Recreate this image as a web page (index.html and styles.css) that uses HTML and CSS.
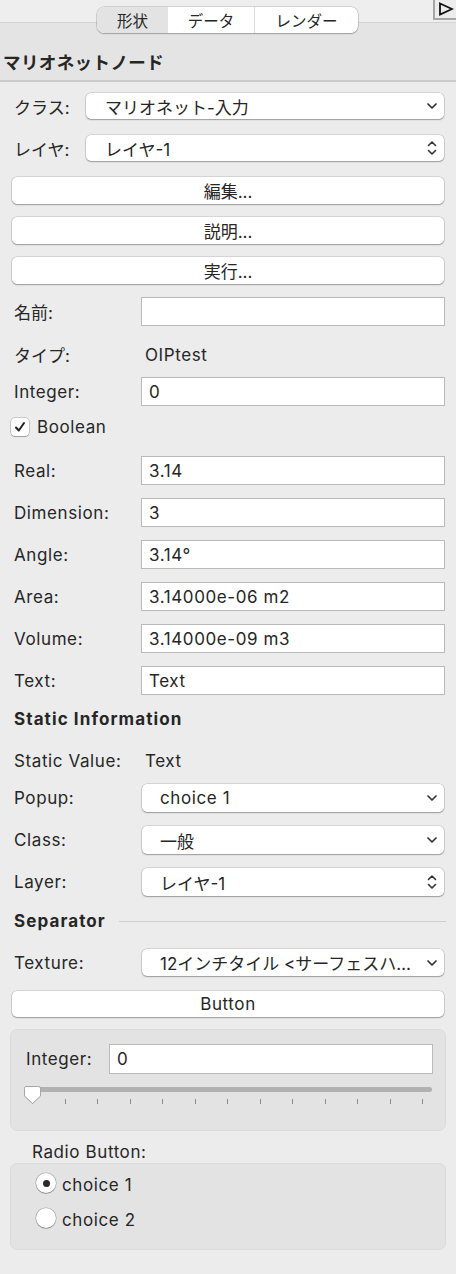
FILE: index.html
```html
<!DOCTYPE html>
<html lang="ja">
<head>
<meta charset="utf-8">
<title>マリオネットノード</title>
<link rel="stylesheet" href="styles.css">
</head>
<body>
<div class="topbar">
  <div class="seg">
    <div class="seg-item sel">形状</div>
    <div class="seg-item mid">データ</div>
    <div class="seg-item last">レンダー</div>
  </div>
  <div class="collapse">
    <svg width="16" height="14" viewBox="0 0 16 14"><path d="M2 1.5 L14 7 L2 12.5 Z" fill="none" stroke="#111" stroke-width="1.8" stroke-linejoin="miter"/></svg>
  </div>
</div>
<div class="title">マリオネットノード</div>

<div class="content">
  <div class="row short h26 m11"><span class="lbl ja">クラス:</span><div class="popup ja"><span>マリオネット-入力</span><svg class="chev" width="10" height="6" viewBox="0 0 10 6"><path d="M1 1 L5 5 L9 1" fill="none" stroke="#333" stroke-width="1.7" stroke-linecap="round" stroke-linejoin="round"/></svg></div></div>
  <div class="row short h26 m16"><span class="lbl ja">レイヤ:</span><div class="popup ja"><span>レイヤ-1</span><svg class="chev" width="10" height="16" viewBox="0 0 10 16"><path d="M1.5 5.5 L5 2 L8.5 5.5 M1.5 10.5 L5 14 L8.5 10.5" fill="none" stroke="#333" stroke-width="1.6" stroke-linecap="round" stroke-linejoin="round"/></svg></div></div>

  <div class="btnrow h27 m16"><div class="btn ja">編集...</div></div>
  <div class="btnrow h27 m13"><div class="btn ja">説明...</div></div>
  <div class="btnrow h27 m13"><div class="btn ja">実行...</div></div>

  <div class="row h29 m13"><span class="lbl wide ja">名前:</span><div class="field"></div></div>
  <div class="row h29 m14"><span class="lbl wide ja">タイプ:</span><span class="static">OIPtest</span></div>
  <div class="row h29 m8"><span class="lbl wide">Integer:</span><div class="field">0</div></div>
  <div class="checkrow m11">
    <span class="checkbox"><svg width="12" height="12" viewBox="0 0 12 12"><path d="M2 6.5 L4.8 9.5 L10 2" fill="none" stroke="#222" stroke-width="2" stroke-linecap="round" stroke-linejoin="round"/></svg></span>
    <span>Boolean</span>
  </div>
  <div class="row h29 m19"><span class="lbl wide">Real:</span><div class="field">3.14</div></div>
  <div class="row h29 m13"><span class="lbl wide">Dimension:</span><div class="field">3</div></div>
  <div class="row h29 m13"><span class="lbl wide">Angle:</span><div class="field">3.14°</div></div>
  <div class="row h29 m13"><span class="lbl wide">Area:</span><div class="field">3.14000e-06 m2</div></div>
  <div class="row h29 m13"><span class="lbl wide">Volume:</span><div class="field">3.14000e-09 m3</div></div>
  <div class="row h29 m13"><span class="lbl wide">Text:</span><div class="field">Text</div></div>

  <div class="row h28 m10"><span class="bold">Static Information</span></div>
  <div class="row h28 m14"><span class="lbl wide">Static Value:</span><span class="static">Text</span></div>
  <div class="row h28 m9"><span class="lbl wide">Popup:</span><div class="popup inset"><span>choice 1</span><svg class="chev" width="10" height="6" viewBox="0 0 10 6"><path d="M1 1 L5 5 L9 1" fill="none" stroke="#333" stroke-width="1.7" stroke-linecap="round" stroke-linejoin="round"/></svg></div></div>
  <div class="row h28 m14"><span class="lbl wide">Class:</span><div class="popup inset ja"><span>一般</span><svg class="chev" width="10" height="6" viewBox="0 0 10 6"><path d="M1 1 L5 5 L9 1" fill="none" stroke="#333" stroke-width="1.7" stroke-linecap="round" stroke-linejoin="round"/></svg></div></div>
  <div class="row h28 m14"><span class="lbl wide">Layer:</span><div class="popup inset ja"><span>レイヤ-1</span><svg class="chev" width="10" height="16" viewBox="0 0 10 16"><path d="M1.5 5.5 L5 2 L8.5 5.5 M1.5 10.5 L5 14 L8.5 10.5" fill="none" stroke="#333" stroke-width="1.6" stroke-linecap="round" stroke-linejoin="round"/></svg></div></div>

  <div class="seprow m11"><span class="bold">Separator</span><span class="sepline"></span></div>
  <div class="row h27 m14"><span class="lbl wide">Texture:</span><div class="popup inset ja"><span>12インチタイル &lt;サーフェスハ…</span><svg class="chev" width="10" height="6" viewBox="0 0 10 6"><path d="M1 1 L5 5 L9 1" fill="none" stroke="#333" stroke-width="1.7" stroke-linecap="round" stroke-linejoin="round"/></svg></div></div>
  <div class="btnrow h26 m15"><div class="btn">Button</div></div>

  <div class="group slidergroup">
    <div class="grouprow"><span class="glbl">Integer:</span><div class="field">0</div></div>
    <div class="slider">
      <div class="track"></div>
      <svg class="thumb" width="21" height="21" viewBox="0 0 21 21"><path d="M3.5 1.5 H16.5 A2 2 0 0 1 18.5 3.5 V11 L10.5 18.5 L2.5 11 V3.5 A2 2 0 0 1 3.5 1.5 Z" fill="#fff" stroke="#a6a6a6" stroke-width="1"/></svg>
      <div class="ticks">
        <i></i><i></i><i></i><i></i><i></i><i></i><i></i><i></i><i></i><i></i><i></i><i></i><i></i>
      </div>
    </div>
  </div>

  <div class="radiolabel">Radio Button:</div>
  <div class="group radiogroup">
    <div class="radio"><span class="circle on"></span><span>choice 1</span></div>
    <div class="radio"><span class="circle"></span><span>choice 2</span></div>
  </div>
</div>
</body>
</html>
```
FILE: styles.css
```css
* { box-sizing: border-box; margin: 0; padding: 0; }
html, body { background: #ececec; }
body {
  width: 456px;
  height: 1274px;
  overflow: hidden;
  font-family: Inter, "Noto Sans CJK JP", sans-serif;
  font-size: 17px;
  letter-spacing: 0.6px;
  color: #262626;
}
.ja { letter-spacing: 0; }

.topbar {
  position: relative;
  height: 23px;
  background: #eeeeee;
  border-bottom: 1px solid #d4d4d4;
}
.seg {
  position: absolute;
  left: 97px;
  top: 7px;
  width: 261px;
  height: 26px;
  display: flex;
  background: #fff;
  border-radius: 7px;
  box-shadow: 0 0 0 0.5px rgba(0,0,0,0.22), 0 1px 1.5px rgba(0,0,0,0.22);
  overflow: hidden;
  z-index: 2;
  letter-spacing: 0;
}
.seg-item {
  display: flex;
  align-items: center;
  justify-content: center;
  font-size: 15.5px;
}
.seg-item.sel { width: 71px; background: #e3e3e3; }
.seg-item.mid { width: 86px; }
.seg-item.last { flex: 1; border-left: 1px solid #d9d9d9; }

.collapse {
  position: absolute;
  right: 0;
  top: 0;
  width: 23px;
  height: 20px;
  border-left: 2px solid #a6a6a6;
  border-bottom: 2px solid #a6a6a6;
  background: #ececec;
  display: flex;
  align-items: center;
  justify-content: center;
}

.title {
  height: 59px;
  padding-left: 3px;
  padding-top: 19px;
  display: flex;
  align-items: center;
  background: #e4e4e4;
  border-bottom: 2px solid #cbcbcb;
  font-weight: 700;
  font-size: 17.5px;
  letter-spacing: 0.4px;
}

.content { display: flex; flex-direction: column; }

.row {
  display: flex;
  align-items: center;
  margin-left: 14px;
  margin-right: 11px;
}
.btnrow { display: flex; margin: 0 12px; }
.h26 { height: 26px; }
.h27 { height: 27px; }
.h28 { height: 28px; }
.h29 { height: 29px; }
.m8 { margin-top: 8px; }
.m9 { margin-top: 9px; }
.m10 { margin-top: 10px; }
.m11 { margin-top: 11px; }
.m13 { margin-top: 13px; }
.m14 { margin-top: 14px; }
.m15 { margin-top: 15px; }
.m16 { margin-top: 16px; }
.m19 { margin-top: 19px; }

.lbl { width: 72px; flex: none; white-space: nowrap; }
.lbl.wide { width: 127px; }
.row.short { margin-right: 12px; }

.popup {
  flex: 1;
  align-self: stretch;
  display: flex;
  align-items: center;
  justify-content: space-between;
  padding: 0 7px 0 19px;
  background: #fff;
  border-radius: 5px;
  box-shadow: 0 0 0 0.5px rgba(0,0,0,0.2), 0 1px 1.5px rgba(0,0,0,0.28);
  white-space: nowrap;
}
.popup.inset { margin-left: 1px; margin-right: 1px; padding-left: 18px; }

.btn {
  flex: 1;
  display: flex;
  align-items: center;
  justify-content: center;
  background: #fff;
  border-radius: 5px;
  box-shadow: 0 0 0 0.5px rgba(0,0,0,0.2), 0 1px 1.5px rgba(0,0,0,0.28);
}

.field {
  flex: 1;
  align-self: stretch;
  display: flex;
  align-items: center;
  padding-left: 7px;
  background: #fff;
  border: 1px solid #bababa;
}
.static { padding-left: 4px; }
.bold { font-weight: 700; letter-spacing: 1.1px; }

.checkrow {
  display: flex;
  align-items: center;
  height: 20px;
  margin-left: 11px;
  gap: 8px;
}
.checkbox {
  width: 18px;
  height: 18px;
  display: flex;
  align-items: center;
  justify-content: center;
  background: #fff;
  border-radius: 4px;
  box-shadow: 0 0 0 0.5px rgba(0,0,0,0.3), 0 1px 1px rgba(0,0,0,0.2);
}

.seprow {
  display: flex;
  align-items: center;
  height: 28px;
  margin-left: 14px;
  margin-right: 10px;
}
.sepline {
  flex: 1;
  height: 1px;
  margin-left: 13px;
  background: #cfcfcf;
}

.group {
  margin: 0 10px;
  background: #e3e3e3;
  border: 1px solid #dcdcdc;
  border-radius: 7px;
}
.slidergroup {
  margin-top: 12px;
  height: 102px;
  padding: 14px 12px 0 15px;
}
.grouprow { display: flex; align-items: center; height: 30px; }
.glbl { width: 83px; flex: none; }

.slider {
  position: relative;
  margin-top: 13px;
  height: 22px;
  width: 406px;
}
.track {
  margin-top: 3px;
  height: 5px;
  border-radius: 3px;
  background: #b1b1b1;
}
.thumb {
  position: absolute;
  left: -4px;
  top: -2px;
  filter: drop-shadow(0 0.5px 0.5px rgba(0,0,0,0.2));
}
.ticks {
  display: flex;
  justify-content: space-between;
  margin-top: 7px;
  padding: 0 9px 0 6px;
}
.ticks i {
  display: block;
  width: 1px;
  height: 5px;
  background: #8c8c8c;
}

.radiolabel {
  margin-top: 11px;
  margin-left: 32px;
  height: 21px;
  line-height: 21px;
}
.radiogroup {
  height: 87px;
  padding: 6px 0 0 25px;
}
.radio {
  display: flex;
  align-items: center;
  height: 30px;
  margin-bottom: 5px;
  gap: 6px;
}
.circle {
  width: 20px;
  height: 20px;
  border-radius: 50%;
  background: #fff;
  box-shadow: 0 0 0 0.5px rgba(0,0,0,0.3), 0 1px 1px rgba(0,0,0,0.2);
  margin-top: -4px;
  display: flex;
  align-items: center;
  justify-content: center;
}
.circle.on::after {
  content: "";
  width: 7px;
  height: 7px;
  border-radius: 50%;
  background: #2a2a2a;
}
```
